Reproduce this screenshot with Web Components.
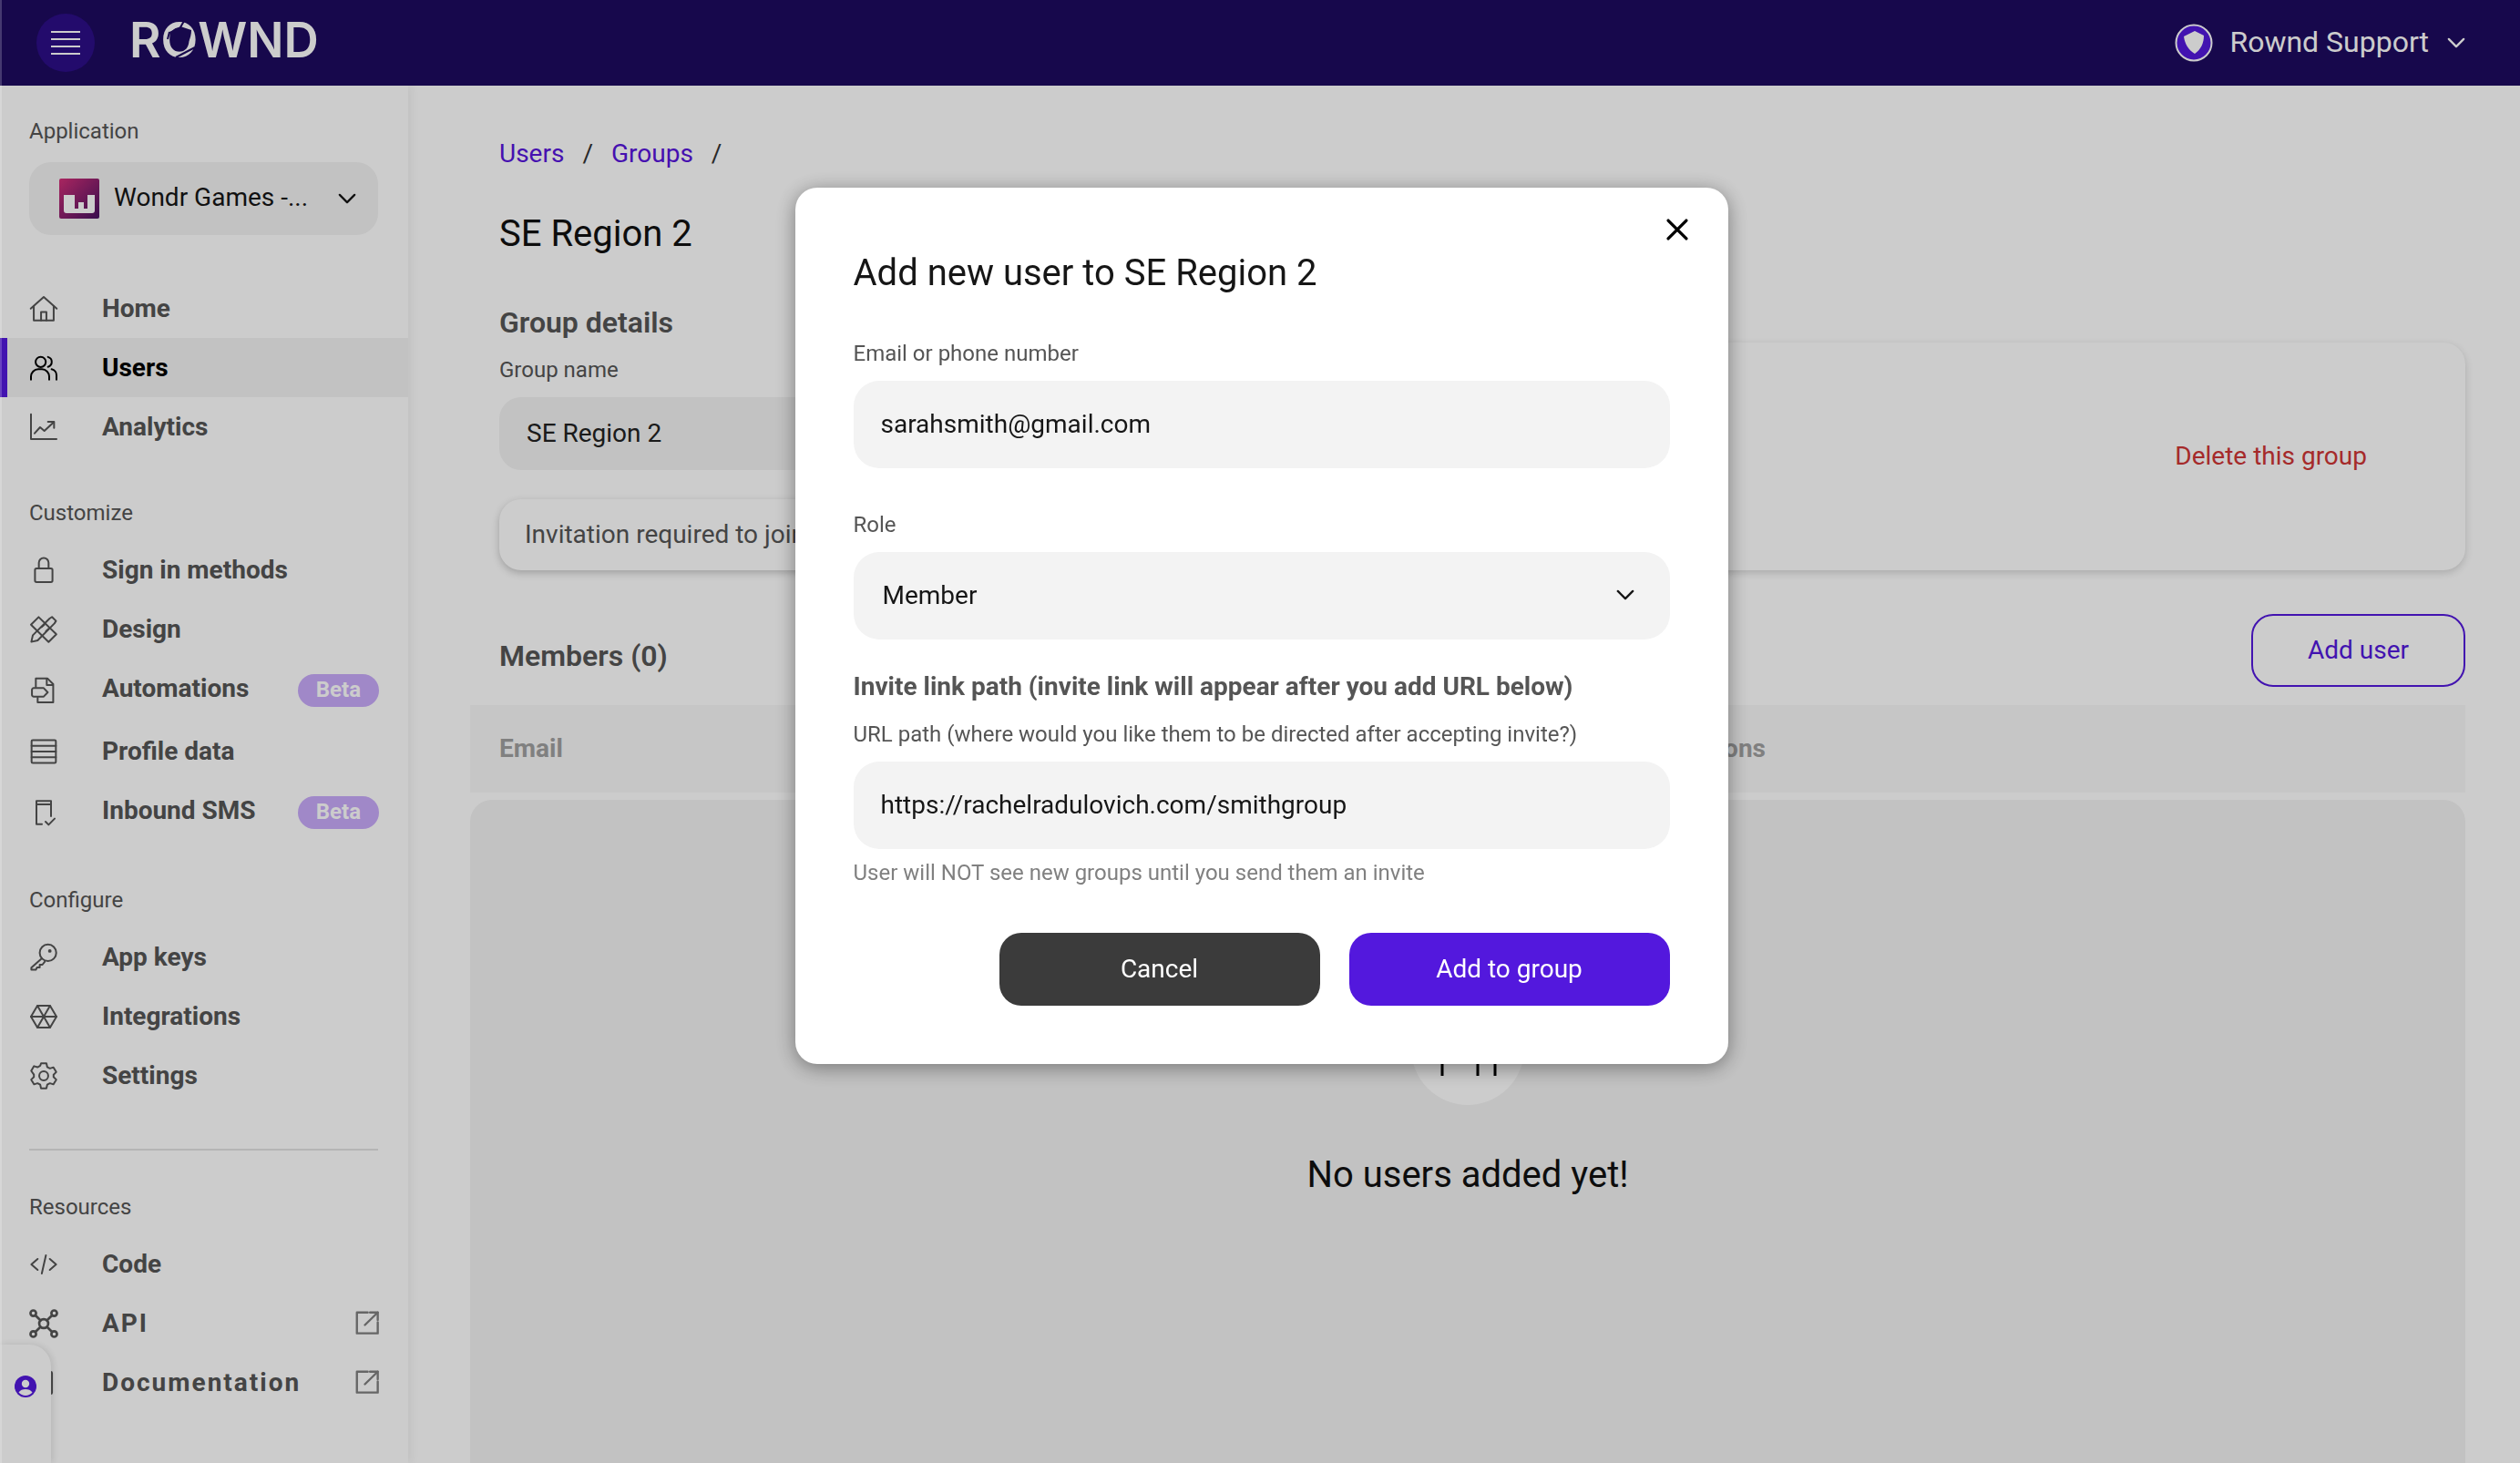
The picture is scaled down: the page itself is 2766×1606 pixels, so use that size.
<!DOCTYPE html>
<html lang="en">
<head>
<meta charset="utf-8">
<title>Rownd</title>
<style>
html, body { margin: 0; height: 1606px; overflow: hidden; background: #fff; }
body { font-family: Roboto, "Liberation Sans", sans-serif; color: #111; }
</style>
</head>
<body>
<rw-app>
  <rw-header slot="header"></rw-header>
  <rw-sidebar slot="sidebar">
    <rw-section-label first>Application</rw-section-label>
    <rw-app-select>Wondr Games -...</rw-app-select>
    <rw-nav-group top="48">
      <rw-nav-item icon="home">Home</rw-nav-item>
      <rw-nav-item icon="users" active>Users</rw-nav-item>
      <rw-nav-item icon="analytics">Analytics</rw-nav-item>
    </rw-nav-group>
    <rw-section-label>Customize</rw-section-label>
    <rw-nav-group>
      <rw-nav-item icon="lock">Sign in methods</rw-nav-item>
      <rw-nav-item icon="design">Design</rw-nav-item>
      <rw-nav-item icon="automation" beta>Automations</rw-nav-item>
      <rw-nav-item icon="rows">Profile data</rw-nav-item>
      <rw-nav-item icon="sms" beta>Inbound SMS</rw-nav-item>
    </rw-nav-group>
    <rw-section-label>Configure</rw-section-label>
    <rw-nav-group>
      <rw-nav-item icon="key">App keys</rw-nav-item>
      <rw-nav-item icon="aperture">Integrations</rw-nav-item>
      <rw-nav-item icon="gear">Settings</rw-nav-item>
    </rw-nav-group>
    <rw-divider></rw-divider>
    <rw-section-label after-rule>Resources</rw-section-label>
    <rw-nav-group>
      <rw-nav-item icon="code">Code</rw-nav-item>
      <rw-nav-item icon="graph" external spaced>API</rw-nav-item>
      <rw-nav-item icon="doc" external spaced>Documentation</rw-nav-item>
    </rw-nav-group>
  </rw-sidebar>
  <rw-group-page slot="main"></rw-group-page>
</rw-app>
<rw-user-tab></rw-user-tab>
<rw-modal-overlay>
  <rw-add-user-modal></rw-add-user-modal>
</rw-modal-overlay>

<script>
// stroke icons, all on a 24 box
const ICONS = {
  home: '<path d="M1.300 11.800 12 2.200l10.700 9.600"/><path d="M3.800 9.800V21.500h16.400V9.800"/><path d="M9.800 21.500v-6.800h4.400v6.800"/>',
  users: '<circle cx="9.500" cy="7" r="4.200"/><path d="M15.500 2.900a4.200 4.200 0 0 1 0 8.100"/><path d="M1.500 21.500v-2.500a6 6 0 0 1 6-6h3a6 6 0 0 1 6 6v2.500"/><path d="M18.500 13a5 5 0 0 1 4 5v3.500"/>',
  analytics: '<path d="M1.500 1.300V21.800h21"/><path d="M4.500 17 9 12l3.500 3L20 8"/><path d="M15.500 7.500H20.500V12.500"/>',
  lock: '<rect x="4.800" y="10.500" width="14.400" height="11.300" rx="1.300"/><path d="M8 10.500V5.800a4 4 0 0 1 8 0v4.700"/>',
  design: '<path d="M7.800 1.800 1.500 8 16 22.300 22.400 16z"/><path d="M10.300 10 12.500 8M13.800 13.500l2.200-2"/><path d="M1.800 22.200l1.200-5.400L16.800 3l2-1.300 3.300 3.300-1.300 2L7 21z"/>',
  automation: '<path d="M5.500 9V2h9.500l4.800 4.800v15H7V18"/><path d="M14.500 2.200V7.500H19.500"/><path d="M3.800 10h8.200l3.300 3.500L12 17H3.800a1.500 1.500 0 0 1-1.500-1.500v-4A1.500 1.500 0 0 1 3.800 10z"/>',
  rows: '<rect x="2" y="2.600" width="20" height="18.800" rx="1"/><path d="M2 7.300h20M2 12h20M2 16.700h20"/>',
  sms: '<path d="M18 15V2.500H6v19h4.500"/><path d="M6 5.200h12"/><path d="m13.500 19.500 2.500 2.500 5-5"/>',
  key: '<circle cx="15.500" cy="8.200" r="6.800"/><circle cx="17" cy="6.700" r=".7"/><path d="M10.500 12.800 1.800 20.500v1.700H5.500l1-2h2.200v-2.200h2.200l2-2.500"/>',
  aperture: '<path d="M6.800 3h10.400L22.500 12l-5.300 9H6.800L1.500 12z"/><path d="M6.800 3 17.200 21M17.200 3 6.800 21M1.500 12h21"/>',
  gear: '<circle cx="12" cy="12" r="3.700"/><path d="M9.800 1.700h4.400l.7 3 2.200 1.200 2.900-.9 2.300 3.900-2.200 2.100v2l2.200 2.100-2.300 3.900-2.900-.9-2.200 1.200-.7 3H9.800l-.7-3-2.200-1.200-2.900.9-2.300-3.900 2.200-2.100v-2L1.700 7.900 4 4l2.900.9 2.200-1.200z"/>',
  code: '<path d="M7 7.500 1.800 12 7 16.500M17 7.500 22.200 12 17 16.500M13.800 4.500l-3.400 15"/>',
  graph: '<circle cx="12" cy="12" r="3.700"/><circle cx="3.400" cy="3.400" r="2.300"/><circle cx="20.600" cy="3.400" r="2.300"/><circle cx="3.400" cy="20.600" r="2.300"/><circle cx="20.600" cy="20.600" r="2.300"/><path d="M5.200 5.200 9.400 9.400M18.800 5.200l-4.200 4.200M5.200 18.800l4.200-4.200M18.800 18.800l-4.200-4.200"/>',
  doc: '<rect x="5" y="3" width="13.800" height="18" rx="1"/><path d="M8 8h8M8 12h8M8 16h5"/>',
  external: '<path d="M12.500 3H3v18.300h18.300v-9.800"/><path d="M10 14 21.300 3"/><path d="M14.500 3h6.800v6.500"/>',
  chevron: '<path d="M5 8.500 12 15.500 19 8.500"/>',
  close: '<path d="M5 5 19 19M19 5 5 19"/>'
};

class RwIcon extends HTMLElement {
  connectedCallback() {
    if (this.shadowRoot) return;
    this.attachShadow({ mode: 'open' });
    const size = this.getAttribute('size') || 32;
    const name = this.getAttribute('name');
    const width = this.getAttribute('stroke') || (name === 'graph' ? 2 : 1.5);
    this.shadowRoot.innerHTML = `
      <style>:host { display: inline-flex; flex: none; } svg { display: block; }</style>
      <svg width="${size}" height="${size}" viewBox="0 0 24 24" fill="none" stroke="currentColor"
        stroke-width="${width}" stroke-linecap="round" stroke-linejoin="round">${ICONS[name] || ''}</svg>`;
  }
}
customElements.define('rw-icon', RwIcon);

// small helper, most elements are only markup and style
function define(name, html) {
  const template = document.createElement('template');
  template.innerHTML = html;
  customElements.define(name, class extends HTMLElement {
    constructor() {
      super();
      this.attachShadow({ mode: 'open' });
      this.shadowRoot.appendChild(template.content.cloneNode(true));
    }
  });
}

define('rw-app', `
<style>
:host { display: grid; grid-template-columns: 448px 1fr; grid-template-rows: 94px 1512px; width: 2766px; height: 1606px; overflow: hidden; }
::slotted([slot=header]) { grid-column: 1 / 3; }
</style>
<slot name="header"></slot><slot name="sidebar"></slot><slot name="main"></slot>`);

define('rw-header', `
<style>
:host { display: flex; align-items: center; height: 94px; background: #1d0a5f; color: #fff; padding: 0 56px 0 40px; box-sizing: border-box; position: relative; z-index: 3; }
.menu { width: 64px; height: 64px; border-radius: 50%; background: #2c0e87; display: flex; flex-direction: column; align-items: center; justify-content: center; gap: 6px; margin-top: -1px; }
.menu i { display: block; width: 32px; height: 2px; background: #fff; }
.logo { margin-left: 38px; font: 600 53px/52px Inter, sans-serif; display: flex; margin-top: -6px; }
.o { position: relative; display: block; }
.o svg { position: absolute; left: 0; top: 0; }
.user { margin-left: auto; display: flex; align-items: center; font-size: 32px; }
.user span { margin: -3px 16px 0 18px; }
</style>
<div class="menu"><i></i><i></i><i></i><i></i></div>
<div class="logo">R<span class="o">O<svg width="42" height="52" viewBox="0 0 42 52">
  <path d="M9 17 21 11 33 15c0 9-4 17-12 23C13 34 10 26 9 17z" fill="#1d0a5f"/>
  <path d="M21 12 25 5M9 17 7 25M16 45 37 34" stroke="#1d0a5f" stroke-width="2" fill="none"/>
</svg></span>WND</div>
<div class="user">
  <svg width="42" height="42" viewBox="0 0 42 42">
    <circle cx="21" cy="21" r="19.500" fill="#5318dd" stroke="#fff" stroke-width="2"/>
    <path d="M10 14 22 8l10 5c0 8-3 15-10 20-7-4-11-11-12-19z" fill="#fff"/>
  </svg>
  <span>Rownd Support</span>
  <rw-icon name="chevron" size="28" stroke="2"></rw-icon>
</div>`);

define('rw-sidebar', `
<style>
:host { display: block; background: #fff; box-shadow: 3px 0 10px rgba(0,0,0,.06); padding-top: 34px; position: relative; z-index: 2; overflow: hidden; height: 1512px; box-sizing: border-box; }
</style>
<slot></slot>`);

define('rw-section-label', `
<style>
:host { display: block; margin: 46px 0 14px 32px; font-size: 24px; line-height: 32px; color: #555; }
:host([first]) { margin: 0 0 18px 32px; }
:host([after-rule]) { margin-top: 46px; }
</style>
<slot></slot>`);

define('rw-app-select', `
<style>
:host { display: flex; align-items: center; width: 383px; height: 80px; margin-left: 32px; box-sizing: border-box; padding: 0 20px 0 33px; background: #f3f3f3; border-radius: 24px; font-size: 28px; color: #161616; }
svg { margin-right: 16px; flex: none; }
span { flex: 1; padding-bottom: 3px; }
</style>
<svg width="44" height="44" viewBox="0 0 44 44">
  <defs><linearGradient id="g" x1="0" y1="0" x2="1" y2="1"><stop offset="0" stop-color="#d42f78"/><stop offset="1" stop-color="#471262"/></linearGradient></defs>
  <rect width="44" height="44" rx="2" fill="url(#g)"/>
  <path d="M5 18h12v15h4V26h6v7h4V18h8v17a3 3 0 0 1-3 3H8a3 3 0 0 1-3-3z" fill="#fff"/>
</svg>
<span><slot></slot></span>
<rw-icon name="chevron" size="28" stroke="2"></rw-icon>`);

define('rw-nav-group', `
<style>
:host { display: block; }
:host([top]) { margin-top: 48px; }
</style>
<slot></slot>`);

class RwNavItem extends HTMLElement {
  constructor() {
    super();
    this.attachShadow({ mode: 'open' });
  }
  connectedCallback() {
    const beta = this.hasAttribute('beta') ? '<span class="beta">Beta</span>' : '';
    const ext = this.hasAttribute('external') ? '<rw-icon class="ext" name="external" size="30" stroke="1.900"></rw-icon>' : '';
    this.shadowRoot.innerHTML = `
      <style>
      :host { display: flex; align-items: center; height: 65px; padding: 0 32px; box-sizing: border-box; color: #555; font-size: 28px; font-weight: 700; position: relative; }
      :host([beta]) { height: 69px; }
      :host([active]) { background: #f3f3f3; color: #000; }
      :host([active])::before { content: ""; position: absolute; left: 0; top: 0; bottom: 0; width: 8px; background: #5318dd; }
      .label { margin-left: 48px; flex: 1; }
      :host([beta]) .label { margin-bottom: 4px; }
      :host([spaced]) .label { letter-spacing: 2px; }
      .beta { background: #c8aafa; color: #fff; font-size: 24px; line-height: 34px; height: 36px; padding: 0 20px; border-radius: 18px; margin-right: 0; }
      .ext { color: #808080; margin-right: -2px; margin-bottom: 1px; }
      </style>
      <rw-icon name="${this.getAttribute('icon')}"></rw-icon>
      <span class="label"><slot></slot></span>${beta}${ext}`;
  }
}
customElements.define('rw-nav-item', RwNavItem);

define('rw-divider', `
<style>:host { display: block; width: 383px; height: 2px; margin: 48px 0 0 32px; background: #e3e3e3; }</style>`);

define('rw-user-tab', `
<style>
:host { position: fixed; left: 0; top: 1476px; width: 56px; height: 130px; background: #fff; border-top-right-radius: 24px; box-shadow: 2px 0 8px rgba(0,0,0,.12); z-index: 4; display: block; }
svg { position: absolute; left: 16px; top: 34px; }
</style>
<svg width="24" height="24" viewBox="0 0 24 24">
  <circle cx="12" cy="12" r="12" fill="#5318dd"/>
  <circle cx="12" cy="9" r="4.200" fill="#fff"/>
  <path d="M4.500 18.500c1.500-2.500 4.500-3.500 7.500-3.500s6 1 7.500 3.500C17.500 20.800 15 22 12 22s-5.500-1.200-7.500-3.500z" fill="#fff"/>
</svg>`);

define('rw-group-page', `
<style>
:host { display: block; background: #fff; height: 1512px; box-sizing: border-box; padding: 55px 60px 0 68px; overflow: hidden; }
.crumbs { margin-left: 32px; font-size: 28px; line-height: 40px; color: #333; display: flex; gap: 20px; }
.crumbs a { color: #5714dc; }
h1 { margin: 40px 0 0 32px; font-size: 40px; line-height: 56px; font-weight: 400; color: #111; }
.details { display: grid; grid-template-columns: 552px 1fr; gap: 64px; margin: 49px 0 0 32px; }
h2 { margin: 0; font-size: 32px; line-height: 40px; font-weight: 600; color: #555; }
.field-label { margin-top: 16px; font-size: 24px; line-height: 32px; color: #555; }
.input { margin-top: 14px; height: 80px; border-radius: 24px; background: #f3f3f3; display: flex; align-items: center; padding: 0 30px 2px; box-sizing: border-box; font-size: 28px; color: #222; }
.invite { margin-top: 32px; height: 78px; border-radius: 24px; background: #fff; box-shadow: 0 3px 8px rgba(0,0,0,.22); display: flex; align-items: center; padding: 0 28px 2px; box-sizing: border-box; font-size: 28px; color: #555; white-space: nowrap; overflow: hidden; }
.card { margin-top: 42px; height: 250px; border-radius: 24px; background: #fff; box-shadow: 0 3px 8px rgba(0,0,0,.16); display: flex; align-items: center; justify-content: flex-end; padding: 0 108px 2px 0; box-sizing: border-box; font-size: 28px; color: #cf3535; }
.members { display: flex; justify-content: space-between; align-items: center; margin: 48px 0 0 32px; }
.members h2 { padding-top: 12px; }
.add { width: 235px; height: 80px; box-sizing: border-box; border: 2px solid #5318dd; border-radius: 24px; color: #5318dd; font-size: 28px; display: flex; align-items: center; justify-content: center; padding-bottom: 2px; }
.thead { margin-top: 20px; height: 96px; background: #f8f8f8; display: grid; grid-template-columns: 1fr auto; align-items: center; padding: 0 768px 2px 32px; box-sizing: border-box; font-size: 28px; font-weight: 700; color: #a0a0a0; }
.tbody { margin-top: 8px; height: 800px; border-radius: 24px 24px 0 0; background: #f3f3f3; display: flex; flex-direction: column; align-items: center; padding-top: 211px; box-sizing: border-box; }
.circle { width: 124px; height: 124px; border-radius: 50%; background: #fff; }
.tbody p { margin: 49px 0 0; font-size: 40px; line-height: 56px; color: #111; }
</style>
<nav class="crumbs"><a>Users</a><span>/</span><a>Groups</a><span>/</span></nav>
<h1>SE Region 2</h1>
<section class="details">
  <div>
    <h2>Group details</h2>
    <div class="field-label">Group name</div>
    <div class="input">SE Region 2</div>
    <div class="invite">Invitation required to join</div>
  </div>
  <div class="card">Delete this group</div>
</section>
<div class="members"><h2>Members (0)</h2><div class="add">Add user</div></div>
<div class="thead"><span>Email</span><span>Actions</span></div>
<div class="tbody">
  <div class="circle">
    <svg width="124" height="124" viewBox="0 0 124 124" fill="none" stroke="#000" stroke-width="3">
      <path d="M34 60v32M73 60v32M92 60v32"/>
    </svg>
  </div>
  <p>No users added yet!</p>
</div>`);

define('rw-modal-overlay', `
<style>
:host { position: fixed; inset: 0; background: rgba(0,0,0,.2); display: flex; justify-content: center; align-items: flex-start; padding: 206px 0 0 3px; box-sizing: border-box; z-index: 10; }
:host::before { content: ""; position: absolute; left: 0; top: 0; bottom: 0; width: 2px; background: rgba(255,255,255,.2); }
</style>
<slot></slot>`);

define('rw-text-field', `
<style>
:host { display: flex; align-items: center; justify-content: space-between; height: 96px; border-radius: 28px; background: #f3f3f3; padding: 0 28px 2px 30px; box-sizing: border-box; font-size: 28px; color: #161616; }
</style>
<slot></slot>`);

define('rw-add-user-modal', `
<style>
:host { display: block; position: relative; width: 1024px; height: 962px; box-sizing: border-box; padding: 64px; background: #fff; border-radius: 24px; box-shadow: 0 4px 22px rgba(0,0,0,.4); color: #161616; }
.close { position: absolute; right: 39px; top: 29px; color: #000; }
h1 { margin: 0 0 -2px; padding-top: 2px; font-size: 40px; line-height: 56px; font-weight: 400; }
label { display: block; font-size: 24px; line-height: 32px; color: #555; margin-top: 46px; margin-bottom: 14px; }
h2 { margin: 32px 0 16px; font-size: 28px; line-height: 40px; font-weight: 700; color: #555; }
h2 + label { margin-top: 0; }
.role { padding: 0 35px 2px 32px; }
.help { margin-top: 10px; font-size: 24px; line-height: 32px; color: #808080; }
.actions { display: flex; justify-content: flex-end; gap: 32px; margin-top: 50px; }
.actions div { width: 352px; height: 80px; border-radius: 24px; color: #fff; font-size: 28px; display: flex; align-items: center; justify-content: center; padding-bottom: 2px; box-sizing: border-box; }
.cancel { background: #3b3b3b; }
.save { background: #5318dd; }
</style>
<rw-icon class="close" name="close" size="34" stroke="2.300"></rw-icon>
<h1>Add new user to SE Region 2</h1>
<label>Email or phone number</label>
<rw-text-field>sarahsmith@gmail.com</rw-text-field>
<label>Role</label>
<rw-text-field class="role">Member<rw-icon name="chevron" size="28" stroke="2"></rw-icon></rw-text-field>
<h2>Invite link path (invite link will appear after you add URL below)</h2>
<label>URL path (where would you like them to be directed after accepting invite?)</label>
<rw-text-field>https://rachelradulovich.com/smithgroup</rw-text-field>
<div class="help">User will NOT see new groups until you send them an invite</div>
<div class="actions"><div class="cancel">Cancel</div><div class="save">Add to group</div></div>`);
</script>
</body>
</html>
